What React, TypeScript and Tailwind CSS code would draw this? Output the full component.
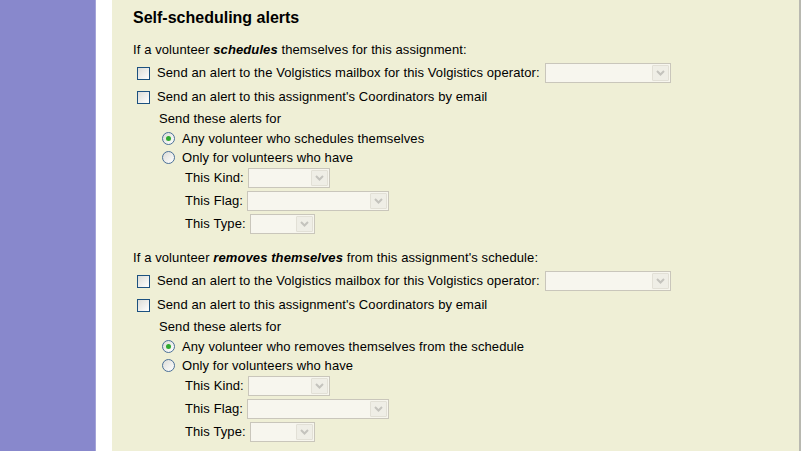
import React from 'react'

const font = { fontFamily: '"Liberation Sans", Arial, sans-serif' }

const Check = () => (
    <span className="inline-block w-[13px] h-[13px] border border-[#1c5180] bg-gradient-to-br from-[#dcdcd7] to-white shrink-0" />
)

const Radio = ({ on }: { on?: boolean }) => (
    <span className="relative inline-flex items-center justify-center w-[13px] h-[13px] rounded-full border border-[#4a6f98] bg-gradient-to-br from-[#dcdcd7] to-white shrink-0">
        {on && <span className="w-[5px] h-[5px] rounded-full bg-[#2fa92f]" />}
    </span>
)

const Select = ({ w }: { w: string }) => (
    <span className={`inline-flex items-stretch h-[20px] border border-[#c9c6bb] bg-[#f7f6ee] p-[1px] ${w}`}>
        <span className="flex-1" />
        <span className="w-[17px] flex items-center justify-center border border-[#e2e0d6] bg-[#efeee6] rounded-[1px]">
            <svg width="9" height="6" viewBox="0 0 9 6">
                <path d="M1 1 L4.5 4.5 L8 1" stroke="#c4c3bd" strokeWidth="2" fill="none" />
            </svg>
        </span>
    </span>
)

const Block = ({ lead, bold, tail, any }: { lead: string; bold: string; tail: string; any: string }) => (
    <div className="flex flex-col text-[13px] tracking-[0.1px] text-black">
        <div className="h-[22px] flex items-center">
            {lead}&nbsp;<b className="italic">{bold}</b>&nbsp;{tail}
        </div>
        <div className="h-[24px] flex items-center pl-[4px] gap-[7px]">
            <Check />
            <span>Send an alert to the Volgistics mailbox for this Volgistics operator:</span>
            <Select w="w-[126px] -ml-[2px]" />
        </div>
        <div className="h-[24px] flex items-center pl-[4px] gap-[7px]">
            <Check />
            <span>Send an alert to this assignment's Coordinators by email</span>
        </div>
        <div className="pl-[26px] flex flex-col">
            <div className="h-[20px] flex items-center">Send these alerts for</div>
            <div className="h-[19px] flex items-center pl-[3px] gap-[7px]">
                <Radio on />
                <span>{any}</span>
            </div>
            <div className="h-[19px] flex items-center pl-[3px] gap-[7px]">
                <Radio />
                <span>Only for volunteers who have</span>
            </div>
            <div className="pl-[26px] flex flex-col">
                <div className="h-[22px] flex items-center gap-[4px]">
                    <span>This Kind:</span>
                    <Select w="w-[82px]" />
                </div>
                <div className="h-[23px] flex items-center gap-[4px]">
                    <span>This Flag:</span>
                    <Select w="w-[142px]" />
                </div>
                <div className="h-[23px] flex items-center gap-[4px]">
                    <span>This Type:</span>
                    <Select w="w-[65px]" />
                </div>
            </div>
        </div>
    </div>
)

export default function App() {
    return (
        <div className="w-[809px] h-[451px] flex bg-white overflow-hidden" style={font}>
            <div className="w-[96px] bg-[#8888cc] border-r border-[#a4a4d8]" />
            <div className="w-[16px]" />
            <div className="flex-1 bg-[#efefd6] border-r-2 border-[#b8b8b0] pl-[21px] pt-[7px]">
                <h2 className="h-[22px] flex items-center text-[16px] font-bold text-black">Self-scheduling alerts</h2>
                <div className="h-[10px]" />
                <Block
                    lead="If a volunteer"
                    bold="schedules"
                    tail="themselves for this assignment:"
                    any="Any volunteer who schedules themselves"
                />
                <div className="h-[12px]" />
                <Block
                    lead="If a volunteer"
                    bold="removes themselves"
                    tail="from this assignment's schedule:"
                    any="Any volunteer who removes themselves from the schedule"
                />
            </div>
            <div className="w-[8px]" />
        </div>
    )
}
